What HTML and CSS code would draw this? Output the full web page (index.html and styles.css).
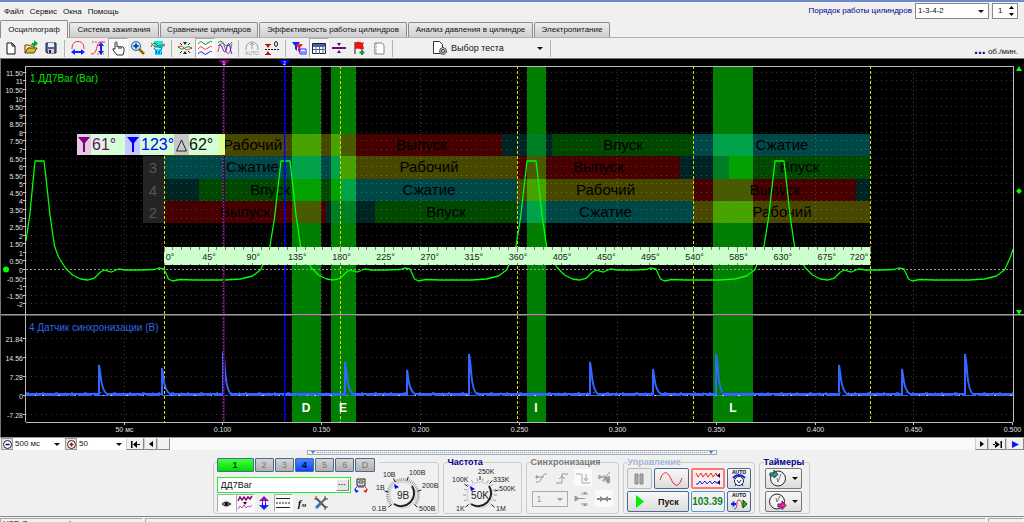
FILE: index.html
```html
<!DOCTYPE html>
<html lang="ru">
<head>
<meta charset="utf-8">
<title>USB Осциллограф</title>
<link rel="stylesheet" href="styles.css">
</head>
<body>
<header class="menubar">
  <nav class="menu">
    <button>Файл</button><button>Сервис</button><button>Окна</button><button>Помощь</button>
  </nav>
  <div class="order">
    <label for="order">Порядок работы цилиндров</label>
    <span class="pick order-pick"><select id="order"><option>1-3-4-2</option><option>1-2-4-3</option></select></span>
    <span class="spin">
      <input type="text" value="1" aria-label="Номер цилиндра">
      <svg width="7" height="12" viewBox="0 0 7 12"><path d="M3.500 1L6 4H1zM3.500 11L1 8H6z"/></svg>
    </span>
  </div>
</header>
<div class="tabs" role="tablist">
  <button class="tab active" role="tab" aria-selected="true">Осциллограф</button>
  <button class="tab t-ign" role="tab">Система зажигания</button>
  <button class="tab t-cmp" role="tab">Сравнение цилиндров</button>
  <button class="tab t-eff" role="tab">Эффективность работы цилиндров</button>
  <button class="tab t-prs" role="tab">Анализ давления в цилиндре</button>
  <button class="tab t-pow" role="tab">Электропитание</button>
</div>
<div class="toolbar">
  <button class="tool" aria-label="Новый"><svg viewBox="0 0 16 16"><path d="M4 3h5l3 3v8H4z" fill="#fff" stroke="#111"/><path d="M9 3v3h3" fill="none" stroke="#111"/></svg></button>
  <button class="tool" aria-label="Открыть"><svg viewBox="0 0 16 16"><path d="M2 13V5h4l1 1h4v2" fill="#ffe98a" stroke="#554400"/><path d="M2 13L5 8h9l-3 5z" fill="#d8b83a" stroke="#554400"/><path d="M8 5q1-3 3-2V0l4 3.500L11 7V5z" fill="#0a2"/></svg></button>
  <button class="tool" aria-label="Сохранить"><svg viewBox="0 0 16 16"><path d="M3 3h10v10H4l-1-1z" fill="#54669c" stroke="#223"/><path d="M5 3h6v4H5z" fill="#e8eef8"/><path d="M5 9h6v4H5z" fill="#ccd"/><path d="M6 10h2v3H6z" fill="#223"/></svg></button>
  <i class="sep"></i>
  <button class="tool" aria-label="Ширина по горизонтали"><svg viewBox="0 0 16 16"><path d="M2 9C2 4 4 1.500 8 1.500s6 2.500 6 7.500" fill="none" stroke="#f22"/><path d="M4 12h8" stroke="#12f" stroke-width="2"/><path d="M1 12l4-3v6zM15 12l-4-3v6z" fill="#12f"/></svg></button>
  <button class="tool" aria-label="Размах по вертикали"><svg viewBox="0 0 16 16"><path d="M1 14c7 1 5-12 9-12h5" fill="none" stroke="#f22"/><path d="M2 2h6M7 14h7" stroke="#d55" stroke-dasharray="2 1"/><path d="M11 5v7" stroke="#12f" stroke-width="2"/><path d="M11 2l3 4H8zM11 15l3-4H8z" fill="#12f"/></svg></button>
  <button class="tool pressed" aria-label="Рука"><svg viewBox="0 0 16 16"><path d="M5 9V3q0-1 1-1t1 1v4q1-1 2 0 1-1 2 0 2-1 3 1v3l-1 4H7L3 10q-1-2 2-1z" fill="#fff" stroke="#333"/><path d="M9 7v2M11 7v2" stroke="#333"/></svg></button>
  <button class="tool" aria-label="Лупа"><svg viewBox="0 0 16 16"><path d="M9 9l5 5" stroke="#a80" stroke-width="3"/><path d="M9 9l5 5" stroke="#543" stroke-width="1"/><circle cx="6" cy="6" r="4.500" fill="#bde4fa" stroke="#345c88"/><path d="M6 3.500v5M3.500 6h5" stroke="#14a" stroke-width="2"/></svg></button>
  <button class="tool" aria-label="Масштаб участка"><svg viewBox="0 0 16 16"><path d="M4 1h9v7H4zM5 9h7v6H5z" fill="#0ee"/><path d="M1 7q3-7 6-2t6 0l2-1" fill="none" stroke="#082"/><path d="M1 3q4 5 7 3t7 0" fill="none" stroke="#f33"/><path d="M4 8l3 4M12 8l-3 4M5 13h7" stroke="#12f" stroke-dasharray="2 1"/></svg></button>
  <i class="sep"></i>
  <button class="tool" aria-label="Совместить нули"><svg viewBox="0 0 16 16"><path d="M1 8q3-4 6 0t8-1" fill="none" stroke="#f33"/><path d="M1 6q3 5 7 2t7 1" fill="none" stroke="#093"/><path d="M3 3l2 2M13 3l-2 2M3 13l2-2M13 13l-2-2" stroke="#222"/><path d="M8 5L6 2h4zM8 11l-2 3h4z" fill="#222"/></svg></button>
  <button class="tool pressed" aria-label="Разнести лучи"><svg viewBox="0 0 16 16"><path d="M1 4q3-4 5-1t5 0 4-1" fill="none" stroke="#093"/><path d="M1 9q3-4 5-1t5 0 4-1" fill="none" stroke="#f33"/><path d="M1 14q3-4 5-1t5 0 4-1" fill="none" stroke="#12f"/></svg></button>
  <button class="tool" aria-label="Наложить лучи"><svg viewBox="0 0 16 16"><path d="M1 3q3-4 6 1t8-2" fill="none" stroke="#093"/><path d="M1 12C3 1 6 1 8 8s4 9 7-4" fill="none" stroke="#f33"/><path d="M1 6c4-5 5 7 7 6s2-10 4-8 1 8 3 10" fill="none" stroke="#12f"/></svg></button>
  <i class="sep"></i>
  <button class="tool" aria-label="Автомасштаб" disabled><svg viewBox="0 0 16 16"><path d="M2 10C2 5 4 2 8 2s6 3 6 8M8 3v6M6 5l2-2 2 2" fill="none" stroke="#999"/><text x="8" y="15" text-anchor="middle" class="mini" fill="#999">AUTO</text></svg></button>
  <button class="tool" aria-label="Установить ноль"><svg viewBox="0 0 16 16"><path d="M1 9.500h14" stroke="#111" stroke-dasharray="2 1"/><path d="M4 8L2 5h4zM4 11l-2 3h4z" fill="#a11"/><path d="M1 4.500h6M1 14.500h6" stroke="#a11"/><ellipse cx="12" cy="4" rx="1.500" ry="2.500" fill="none" stroke="#222"/></svg></button>
  <i class="sep"></i>
  <button class="tool" aria-label="Фильтр"><svg viewBox="0 0 16 16"><path d="M1 2h8L6 6v5L4 9V6z" fill="#12f"/><path d="M5 4h7L9 8v5L7 11V8z" fill="#e23"/><path d="M9 9h6v5H9z" fill="#fff" stroke="#12f"/><path d="M10 12h4" stroke="#12f"/></svg></button>
  <button class="tool pressed" aria-label="Таблица"><svg viewBox="0 0 16 16"><path d="M1.500 3.500h13v10h-13z" fill="#fff" stroke="#124"/><path d="M2 4h12v2H2z" fill="#55a"/><path d="M2 6.500h13M2 9.500h13M5 4v10M8.500 4v10M12 4v10" stroke="#568"/></svg></button>
  <button class="tool" aria-label="Линейка"><svg viewBox="0 0 16 16"><path d="M1 8h14" stroke="#808" stroke-width="2"/><path d="M8 6L6 3h4zM8 10l-2 3h4z" fill="#222"/></svg></button>
  <button class="tool" aria-label="Добавить метку"><svg viewBox="0 0 16 16"><path d="M4 2v12" stroke="#111"/><path d="M4 3q2-2 5-1t4 0l-1 3 1 4q-2 1-4 0t-5 0z" fill="#e11"/><path d="M11 10v5M8.500 12.500h5" stroke="#094" stroke-width="2"/></svg></button>
  <button class="tool" aria-label="Отчёт"><svg viewBox="0 0 16 16"><path d="M4 3h7l2 2v9H4z" fill="#fff" stroke="#888"/><path d="M3 4h3M3 7h3M3 10h3M3 13h3" stroke="#888" stroke-dasharray="1 1"/></svg></button>
  <i class="sep"></i>
  <button class="test">
    <svg class="test-icon" viewBox="0 0 16 16"><path d="M1.500 1.500h6l3 3v9h-9z" fill="#fff" stroke="#333"/><circle cx="11" cy="11" r="3.500" fill="#9ab09a" stroke="#333" stroke-dasharray="2 1"/><circle cx="11" cy="11" r="1.500" fill="#fff" stroke="#343"/></svg>
    <span>Выбор теста</span><b class="caret"></b>
  </button>
  <i class="sep"></i>
  <div class="rpm"><b>...</b> об./мин.</div>
</div>
<main class="scope">
  <svg id="chart" class="chart" viewBox="0 59 1024 378"></svg>
</main>
<div class="timebar">
  <button class="sq" aria-label="Уменьшить масштаб времени"><svg width="11" height="11" viewBox="0 0 11 11"><circle cx="5.500" cy="5.500" r="4" fill="#fff" stroke="#222"/><path d="M3.500 5.500h4" stroke="#00a" stroke-width="1.500"/></svg></button>
  <span class="pick scale-pick"><select aria-label="Развёртка"><option>500 мс</option></select></span>
  <button class="sq" aria-label="Увеличить масштаб"><svg width="11" height="11" viewBox="0 0 11 11"><circle cx="5.500" cy="5.500" r="4" fill="#fff" stroke="#222"/><path d="M3.500 5.500h4M5.500 3.500v4" stroke="#b00" stroke-width="1.500"/></svg></button>
  <span class="pick step-pick"><select aria-label="Шаг"><option>50</option></select></span>
  <button class="scroll wide" aria-label="В начало"><svg width="9" height="7" viewBox="0 0 9 7"><path d="M0 0h1.500v7H0zM6 0v7L2 3.500zM6 3h3v1H6z"/></svg></button>
  <button class="scroll" aria-label="Назад"><svg width="4" height="6" viewBox="0 0 4 6"><path d="M4 0v6L0 3z"/></svg></button>
  <button class="scroll" aria-label="Ползунок"></button>
  <span class="track"></span>
  <button class="scroll" aria-label="Вперёд"><svg width="4" height="6" viewBox="0 0 4 6"><path d="M0 0v6l4-3z"/></svg></button>
  <button class="scroll wide" aria-label="В конец"><svg width="9" height="7" viewBox="0 0 9 7"><path d="M9 0H7.500v7H9zM2 0v7l5-3.500zM0 3h3v1H0z"/></svg></button>
  <button class="scroll wide" aria-label="Следить"><svg width="7" height="7" viewBox="0 0 7 7"><path d="M0 0v7l7-3.500z" fill="#11f"/></svg></button>
</div>
<div class="splitter"><b></b><i></i><b></b></div>
<section class="panel">
  <div class="group channels">
    <div class="chan-row">
      <button class="chan on1">1</button><button class="chan">2</button><button class="chan">3</button><button class="chan on4">4</button><button class="chan">5</button><button class="chan">6</button><button class="chan">D</button>
    </div>
    <div class="chan-left">
      <div class="name-row">
        <span class="name"><input type="text" value="ДД7Bar" aria-label="Датчик"><button aria-label="Выбрать датчик">···</button></span>
        <svg width="16" height="16" viewBox="0 0 16 16"><path d="M4 2h8v7H4z" fill="#ddd" stroke="#222"/><path d="M6 4h4v2H6zM5 10h6" fill="#fff" stroke="#444"/><path d="M4 10q-3 1-1 4" fill="none" stroke="#12f"/><path d="M1 12l5 2-3 2z" fill="#12f"/><path d="M12 10q3 1 1 4" fill="none" stroke="#e22"/><path d="M15 12l-5 2 3 2z" fill="#e22"/></svg>
      </div>
      <div class="icon-row">
        <button class="tool pressed" aria-label="Видимость"><svg viewBox="0 0 16 16"><path d="M4 9q4-4 9 0-5 4-9 0z" fill="#bbb" stroke="#222"/><circle cx="8.500" cy="9" r="2" fill="#111"/></svg></button>
        <button class="tool pressed" aria-label="Инверсия"><svg viewBox="0 0 16 16"><path d="M1 6l2-4 2 3 2-3 2 3 2-3 2 2 2-3" fill="none" stroke="#808" stroke-width="1.500"/><path d="M1 14l2-3 2 2 2-3 2 3 2-2 2 1 2-2" fill="none" stroke="#c4b"/><path d="M6 7h4L8 10z" fill="#111"/></svg></button>
        <button class="tool" aria-label="Смещение"><svg viewBox="0 0 16 16"><path d="M8 1l5 5h-3v2H6V6H3z" fill="#91b"/><path d="M8 15l5-5h-3V8H6v2H3z" fill="#12f"/><path d="M7 6h2v4H7z" fill="#eef"/></svg></button>
        <button class="tool pressed" aria-label="Уровни"><svg viewBox="0 0 16 16"><path d="M1 3.500h14M1 12.500h14" stroke="#222"/><path d="M1 8h14" stroke="#222" stroke-dasharray="2 1"/></svg></button>
        <button class="tool fx" aria-label="Функция">f<small>м</small></button>
        <button class="tool" aria-label="Настройки"><svg viewBox="0 0 16 16"><path d="M3 3l10 10" stroke="#555" stroke-width="2"/><path d="M13 3L8 8" stroke="#666" stroke-width="2"/><path d="M8 8l-5 5" stroke="#37b" stroke-width="3"/><path d="M3 1v3H1M15 4h-3V1M12 15v-3h3" fill="none" stroke="#555"/></svg></button>
      </div>
    </div>
    <svg class="knob" id="gain" viewBox="0 0 68 50" width="68" height="50"></svg>
  </div>
  <fieldset class="group freq"><legend>Частота</legend><svg class="knob" id="rate" viewBox="0 0 75 46" width="75" height="46"></svg></fieldset>
  <fieldset class="group sync" disabled><legend>Синхронизация</legend>
    <div class="sync-row">
      <button class="tool" aria-label="Автосинхронизация"><svg viewBox="0 0 16 16"><path d="M3 12c7 2 4-9 11-8M2 7h9" fill="none" stroke="#999"/><path d="M3 5l3 2-3 2z" fill="#999"/></svg></button>
      <button class="tool" aria-label="По фронту"><svg viewBox="0 0 16 16"><path d="M2 13h6V4h6M5 9l3-3 3 3" fill="none" stroke="#999"/></svg></button>
      <button class="tool lit" aria-label="По спаду"><svg viewBox="0 0 16 16"><path d="M1 4h6v9h8M11 4v7M9 8l2 3 2-3" fill="none" stroke="#aaa"/></svg></button>
      <button class="tool" aria-label="По уровню"><svg viewBox="0 0 16 16"><path d="M2 7h6M3 5v4l3-2zM8 5v7M8 8l6-6M6 11l5-4" fill="none" stroke="#999"/><path d="M9 7l5-1v6l-2 2-3-4z" fill="#999"/></svg></button>
    </div>
    <div class="sync-row">
      <span class="pick sync-pick"><select aria-label="Канал синхронизации"><option>1</option></select></span>
      <button class="tool" aria-label="Уровень"><svg viewBox="0 0 16 16"><path d="M2 5v5l4-2.500zM6 7.500h6" fill="#999" stroke="#999"/><path d="M8 3h7M8 13h7" stroke="#999"/><path d="M10 1h4l-2 3zM10 15h4l-2-3z" fill="#999"/></svg></button>
      <button class="tool lit" aria-label="Центр"><svg viewBox="0 0 16 16"><path d="M1 8h14" stroke="#888" stroke-width="2"/><path d="M4 5l4 3-4 3zM12 5L8 8l4 3z" fill="#888"/></svg></button>
    </div>
  </fieldset>
  <fieldset class="group control"><legend>Управление</legend>
    <div class="ctl">
      <button class="btn off" aria-label="Пауза" disabled><svg width="12" height="14" viewBox="0 0 12 14"><path d="M2 2h3v10H2zM7 2h3v10H7z" fill="#aaa" stroke="#888"/></svg></button>
      <button class="btn" aria-label="Форма сигнала"><svg width="26" height="16" viewBox="0 0 26 16"><path d="M2 9C5 0 9-1 13 8s8 8 11-1" fill="none" stroke="#e22"/></svg></button>
      <button class="btn red" aria-label="Запись"><svg width="26" height="16" viewBox="0 0 26 16"><path d="M1 2l2 4 3-4 2 4 3-4 2 4 3-4 2 4 3-4 1 3h2" fill="none" stroke="#e22"/><path d="M1 13h2l2-3 2 3 3-3 2 3 3-3 2 3 3-3 1 2h2" fill="none" stroke="#12e"/><path d="M25 2v5l-3-2.500zM25 9v5l-3-2.500z" fill="#116"/></svg></button>
      <button class="btn" aria-label="Авто по времени"><svg width="20" height="19" viewBox="0 0 20 19"><text x="10" y="5" text-anchor="middle" class="mini bold">AUTO</text><path d="M4 9q6-6 12 0" fill="none" stroke="#12e" stroke-width="2"/><circle cx="10" cy="12" r="4.500" fill="#fff" stroke="#222"/><path d="M8 11l2 3 2-3M6 17l1-2M14 17l-1-2" fill="none" stroke="#12a"/></svg></button>
      <button class="btn run"><svg width="8" height="13" viewBox="0 0 8 13"><path d="M0 0v13l8-6.500z" fill="#0e0"/></svg><span>Пуск</span></button>
      <output class="btn value">103.39</output>
      <button class="btn" aria-label="Авто по сигналу"><svg width="20" height="19" viewBox="0 0 20 19"><text x="10" y="5" text-anchor="middle" class="mini bold">AUTO</text><path d="M5 17c5 0 1-9 5-9s2 9 5 7" fill="none" stroke="#a33"/><path d="M2 12h5M4.500 9.500v5" stroke="#12e" stroke-width="2"/><path d="M14 8v8l4-4z" fill="#0c0" stroke="#232"/></svg></button>
    </div>
  </fieldset>
  <fieldset class="group timers"><legend>Таймеры</legend>
    <div class="tim">
      <button class="btn gray" aria-label="Таймер старта"><svg width="20" height="19" viewBox="0 0 20 19"><circle cx="10" cy="9.500" r="7.500" fill="#f4f4f4" stroke="#222"/><path d="M9 9l1 4 3-8" fill="none" stroke="#777"/><path d="M2 4h4V1l4 4.500L6 9V7H2z" fill="#3a9a8a" stroke="#144"/></svg><b class="caret"></b></button>
      <button class="btn gray" aria-label="Таймер остановки"><svg width="20" height="19" viewBox="0 0 20 19"><circle cx="9" cy="9.500" r="7.500" fill="#f4f4f4" stroke="#222"/><path d="M8 6l1 4 3-6" fill="none" stroke="#777"/><path d="M10 12h4V9l4 4.500-4 4V15h-4z" fill="#e2b" stroke="#615"/></svg><b class="caret"></b></button>
    </div>
  </fieldset>
</section>
<footer class="status"><span class="st-a">USB Осциллограф</span><span class="st-b"></span><span class="st-c"></span></footer>
<script src="chart.js"></script>
</body>
</html>
```
FILE: styles.css
```css
* { box-sizing: border-box; }
body {
  margin: 0; height: 100vh; overflow: hidden;
  display: flex; flex-direction: column;
  background: #f0f0f0; color: #111;
  font: 8px/10px "Liberation Sans", Arial, sans-serif;
  border-top: 2px solid #6c8ac8;
}
button, input, select {
  font: inherit; color: inherit; margin: 0; padding: 0; border: 0;
  background: none; appearance: none; border-radius: 0; outline: 0;
}
svg { display: block; flex: none; }
.mini { font: 5px "Liberation Sans", sans-serif; }
.bold { font-weight: bold; }

.menubar { display: flex; justify-content: space-between; height: 18px; flex: none; padding: 0 6px 0 4px; }
.menu { display: flex; gap: 6px; align-items: center; padding-top: 2px; }
.order { display: flex; align-items: center; gap: 3px; }
.order label { color: #00008b; }
.pick { position: relative; display: flex; }
.pick select { width: 100%; padding: 0 12px 0 2px; line-height: 12px; }
.pick::after, .caret { border: 3px solid transparent; border-top-color: #111; border-bottom: 0; width: 0; height: 0; }
.pick::after { content: ""; position: absolute; right: 4px; top: 50%; margin-top: -1px; pointer-events: none; }
.order-pick { width: 74px; height: 16px; background: #fff; border: 1px solid #888; }
.spin { display: flex; align-items: center; width: 26px; height: 16px; background: #fff; border: 1px solid #888; }
.spin input { width: 15px; padding-left: 5px; }

.tabs { display: flex; align-items: flex-end; gap: 1px; height: 18px; flex: none; border-bottom: 1px solid #b0b0b0; }
.tab {
  height: 15px; text-align: center; white-space: nowrap;
  border: 1px solid #8c8c8c; border-bottom: 0; border-radius: 2px 2px 0 0;
  background: linear-gradient(#ececec, #cfcfcf);
}
.tab.active { width: 68px; height: 18px; margin-bottom: -1px; background: #f0f0f0; }
.t-ign { width: 90px; }
.t-cmp { width: 98px; }
.t-eff { width: 148px; }
.t-prs { width: 125px; }
.t-pow { width: 76px; }

.toolbar { display: flex; align-items: center; height: 21px; flex: none; padding: 0 6px 0 1px; border-bottom: 1px solid #777; }
.tool { width: 20px; height: 20px; display: flex; align-items: center; justify-content: center; }
.tool svg { width: 16px; height: 16px; }
.pressed { background: #fafafa; border: 1px solid; border-color: #aaa #fff #fff #aaa; }
.sep { width: 1px; height: 17px; margin: 0 3px; background: #b4b4b4; }
.test { display: flex; align-items: center; gap: 3px; width: 151px; height: 20px; padding: 0 4px 0 36px; font-size: 9px; }
.test-icon { width: 16px; height: 16px; }
.test .caret { margin-left: auto; }
.rpm { margin-left: auto; padding-top: 4px; }
.rpm b { color: #00008b; font-size: 14px; }

.scope { flex: none; background: #000; }
.chart { width: 100%; height: auto; }
.chart text { font-family: "Liberation Sans", Arial, sans-serif; }
.crisp { shape-rendering: crispEdges; }
.axis-text { font-size: 7px; fill: #e0e0e0; }
.stroke-text { font-size: 15px; fill: #000; text-anchor: middle; }
.cyl-text { font-size: 15px; fill: #555; text-anchor: middle; }
.ruler-text { font-size: 9px; fill: #222; text-anchor: middle; }
.name-text { font-size: 10px; }
.cursor-text { font-size: 16px; }
.mark-text { font-size: 12px; font-weight: bold; fill: #fff; text-anchor: middle; }

.timebar { display: flex; align-items: center; height: 13px; flex: none; background: #fafafa; border-top: 1px solid #999; }
.sq { width: 12px; height: 12px; margin-left: 1px; background: #e4e4e4; border: 1px solid #999; display: flex; align-items: center; justify-content: center; }
.scale-pick, .step-pick { font-size: 8px; background: #fff; }
.scale-pick { width: 51px; }
.step-pick { width: 49px; }
.scroll { width: 13px; height: 12px; display: flex; align-items: center; justify-content: center; background: #f0f0f0; border: 1px solid; border-color: #fff #888 #888 #ccc; }
.scroll.wide { width: 18px; }
.track { flex: 1; }

.splitter { display: flex; align-items: center; gap: 2px; width: 40%; height: 5px; flex: none; align-self: center; padding: 0 3px; border: 1px solid #aaa; }
.splitter i { flex: 1; border-top: 1px dotted #6ab0f0; }
.splitter b { border: 2px solid transparent; border-top: 3px solid #28e; border-bottom: 0; }

.panel { display: flex; justify-content: center; gap: 4px; flex: none; height: 61px; padding: 2px 2px 2px 0; }
.group { min-width: 0; margin: 0; padding: 0 2px; border: 1px solid #ccc; border-radius: 3px; }
.group legend { margin-left: 2px; padding: 0; height: 10px; font: bold 9px/10px "Liberation Sans", sans-serif; color: #00008b; }
.channels { display: grid; grid-template-columns: 155px 1fr; width: 226px; margin-top: 5px; padding-left: 3px; }
.chan-row { grid-column: 1 / 3; display: flex; gap: 1px; height: 14px; width: 162px; padding-right: 4px; margin-top: -5px; background: #f0f0f0; }
.chan { flex: 1; border: 1px solid #4a6a90; border-radius: 1px; background: linear-gradient(#d4d4d4, #b0b0b0); color: #777; font-size: 9px; }
.chan.on1 { flex: 0 0 37px; background: linear-gradient(#4f4, #0d0); color: #040; font-weight: bold; }
.chan.on4 { background: linear-gradient(#48f, #14f); color: #003; font-weight: bold; }
.chan-left { display: flex; flex-direction: column; gap: 1px; padding-top: 5px; }
.name-row { display: flex; align-items: center; gap: 2px; }
.name { display: flex; width: 134px; height: 16px; padding: 1px; border: 1px solid #2e2; background: #fff; }
.name input { flex: 1; min-width: 0; padding-left: 2px; font-size: 9px; }
.name button { width: 13px; background: #e8e8e8; border: 1px solid; border-color: #fff #888 #888 #fff; font-weight: bold; line-height: 8px; }
.icon-row { display: flex; height: 18px; }
.icon-row .tool { width: 19px; height: 18px; }
.fx { font: italic bold 11px "Liberation Serif", serif; }
.fx small { font-size: 7px; padding-top: 3px; }
.channels .knob { margin-top: -6px; }
.knob text { font: 7px "Liberation Sans", sans-serif; fill: #222; }
.knob .knob-value { font-size: 10px; text-anchor: middle; }
.freq { width: 79px; }
.freq .knob { margin-top: -1px; }
.sync { width: 93px; }
.group.sync legend { color: #777; }
.sync-row { display: flex; align-items: center; justify-content: space-between; height: 21px; padding: 0 3px; }
.sync-row .tool { width: 18px; height: 17px; }
.lit { background: #fafafa; }
.sync-pick { width: 36px; height: 16px; border: 1px solid #aaa; color: #777; font-size: 9px; padding-left: 2px; }
.sync-pick::after { border-top-color: #999; }
.control { width: 132px; }
.group.control legend { color: #9fb6d4; }
.ctl { display: grid; grid-template-columns: 25px 35px 34px 24px; grid-auto-rows: 21px; gap: 2px; padding: 1px; }
.btn { display: flex; align-items: center; justify-content: center; border: 1px solid #4a6a90; border-radius: 2px; background: linear-gradient(#f8f8f8, #dcdcdc); }
.btn.off { border-color: #bbb; background: #ececec; }
.btn.red { border: 2px solid #f77; background: #fbeeee; }
.btn.run { grid-column: span 2; gap: 14px; font-weight: bold; font-size: 9px; }
.btn.value { color: #188018; font-weight: bold; font-size: 10px; border-color: #5a9ad0; background: #eef2f6; }
.btn.gray { border-color: #777; gap: 4px; }
.timers { width: 51px; }
.tim { display: grid; grid-template-columns: 37px; grid-auto-rows: 21px; gap: 2px; padding: 1px 3px; }

.status { display: flex; gap: 2px; flex: none; height: 20px; border-top: 1px solid #888; padding-top: 1px; }
.status span { border: 1px solid; border-color: #aaa #fff #fff #aaa; }
.st-a { width: 143px; padding: 0 2px; }
.st-b { flex: 1; }
.st-c { width: 36px; }
```
FILE: chart.js
```js
const NS = "http://www.w3.org/2000/svg";
const chart = document.getElementById("chart");

function add(parent, tag, attrs, text) {
  const el = document.createElementNS(NS, tag);
  for (const key in attrs) el.setAttribute(key, attrs[key]);
  if (text !== undefined) el.textContent = text;
  parent.appendChild(el);
  return el;
}
const line = (x1, y1, x2, y2, stroke, dash = "none", width = 1) =>
  add(chart, "line", { x1, y1, x2, y2, stroke, "stroke-dasharray": dash, "stroke-width": width, class: "crisp" });
const rect = (x, y, width, height, fill, opacity = 1) =>
  add(chart, "rect", { x, y, width, height, fill, "fill-opacity": opacity, class: "crisp" });
const text = (x, y, cls, value, extra = {}) => add(chart, "text", { x, y, class: cls, ...extra }, value);

const LEFT = 26, RIGHT = 1013, TOP = 66, SPLIT = 315, BOTTOM = 422;
const timeX = ms => LEFT + (RIGHT - LEFT) * ms / 500 - 0.5;
const barY = v => 269.5 - 17.15 * v;
const voltY = v => 395.5 - 2.62 * v;
const angleX = a => 164 + a * 706 / 720;

rect(0, 59, 1024, 378, "#000");

// phase markers
const marks = [["D", 292, 321, 306], ["E", 331, 356, 343], ["I", 527, 546, 536], ["L", 713, 753, 733]];
marks.forEach(([name, a, b]) => rect(a, TOP, b - a, BOTTOM - TOP, "#008000"));

// grid and axis labels
for (let v = -2; v <= 11.5; v += 0.5) {
  const y = Math.floor(barY(v)) + 0.5;
  line(LEFT, y, RIGHT, y, v === 0 ? "#999" : "#3a3a3a", v === 0 ? "2 2" : "1 4");
  line(LEFT - 3, y, LEFT, y, "#ccc");
  text(23, y + 3, "axis-text", v % 1 ? v.toFixed(2) : v, { "text-anchor": "end" });
}
[21.84, 14.56, 7.28, 0, -7.28].forEach(v => {
  const y = Math.floor(voltY(v)) + 0.5;
  line(LEFT, y, RIGHT, y, v === 0 ? "#ccc" : "#3a3a3a", v === 0 ? "2 2" : "1 4");
  line(LEFT - 3, y, LEFT, y, "#ccc");
  text(23, y + 3, "axis-text", v, { "text-anchor": "end" });
});
for (let t = 50; t <= 500; t += 50) {
  const x = Math.floor(timeX(t)) + 0.5;
  if (t < 500) line(x, TOP, x, BOTTOM, "#444", "1 3");
  line(x, BOTTOM, x, BOTTOM + 3, "#ccc");
  text(x, 432, "axis-text", t === 50 ? "50 мс" : (t / 1000).toFixed(3), { "text-anchor": "middle" });
}

// stroke table: [colour, label, from x, to x]
const Y = "#ff0", R = "#f00", C = "#0ff", G = "#0f0", O = "#008080";
const rows = [
  ["", [[Y, "Рабочий", 164, 341], [R, "Выпуск", 341, 502], [O, "", 502, 552], [G, "Впуск", 552, 694], [C, "Сжатие", 694, 870]]],
  ["3", [[C, "Сжатие", 164, 341], [Y, "Рабочий", 341, 517], [R, "Выпуск", 517, 680], [O, "", 680, 729], [G, "Впуск", 729, 870]]],
  ["4", [[O, "", 164, 199], [G, "Впуск", 199, 341], [C, "Сжатие", 341, 517], [Y, "Рабочий", 517, 694], [R, "Выпуск", 694, 856], [O, "", 856, 870]]],
  ["2", [[R, "Выпуск", 164, 326], [O, "", 326, 375], [G, "Впуск", 375, 517], [C, "Сжатие", 517, 694], [Y, "Рабочий", 694, 870]]]
];
const rowTop = [134, 156, 179, 201, 223];
rows.forEach(([cyl, cells], i) => {
  const top = rowTop[i], height = rowTop[i + 1] - top;
  if (cyl) {
    rect(143, top, 21, height, "#242424");
    text(153, top + 17, "cyl-text", cyl);
  }
  cells.forEach(([fill, label, a, b]) => {
    rect(a, top, b - a, height, fill, 0.28);
    if (label) text((a + b) / 2, top + 16, "stroke-text", label);
  });
});

[0, 180, 360, 540, 720].forEach(a => {
  const x = Math.floor(angleX(a)) + 0.5;
  line(x, TOP, x, BOTTOM, "#dddd00", "3 2");
});

// pressure trace, relative to the centre of each compression peak
const fall = [[4.5, 161], [6.5, 178], [10.5, 215], [15, 246], [19, 257], [26, 268], [33, 275], [41, 279], [48, 280], [55, 278], [61, 272], [65, 270], [72, 272], [79, 269], [86, 270], [100, 270], [115, 269.500], [119, 268], [124.5, 269], [129, 279], [133, 281], [140, 279.500], [155, 280], [180, 280]];
const rise = [[-60, 280], [-45, 279], [-33, 276], [-25, 270], [-19, 257], [-15.5, 246], [-11, 218], [-4.5, 161]];
const peaks = [39.5, 285.5, 531.5, 779.5, 1029.5];
const points = [[26, 241], [30, 213], [35, 161]];
peaks.forEach((c, i) => {
  if (i > 0) rise.forEach(([dx, y]) => points.push([c + dx, y]));
  if (i < 4) fall.forEach(([dx, y]) => points.push([c + dx, y]));
});
const visible = points.filter(p => p[0] < 1011);
visible.push([1013, 249]);
add(chart, "polyline", { points: visible.join(" "), fill: "none", stroke: "#0f0", "stroke-width": 1.3, "stroke-linejoin": "round" });

// synchronisation pulses: [x, peak y]
const pulses = [[99, 365], [162, 368], [223, 352], [345, 362], [407, 370], [469, 354], [590, 362], [653, 369], [716, 354], [839, 365], [902, 369], [965, 354]];
let sync = "M26 394";
pulses.forEach(([x, y]) => {
  sync += `H${x}V${y}L${x + 1.5} ${y + 10}Q${x + 3} 391 ${x + 8} 394`;
});
add(chart, "path", { d: sync + "H1013", fill: "none", stroke: "#36f", "stroke-width": 2 });
line(LEFT, 395.5, RIGHT, 395.5, "#36f", "9 1 5 3 14 2");
line(LEFT, 392.5, RIGHT, 392.5, "#2448b0", "3 7 1 5 2 11");

// cursors
rect(223, TOP, 2, BOTTOM - TOP, "#480048");
line(223.5, TOP, 223.5, BOTTOM, "#a030a0", "1 2");
rect(284, TOP, 1, BOTTOM - TOP, "#0000ff");
rect(285, TOP, 1, BOTTOM - TOP, "#0000ff", 0.4);
[[224, "#800080", 1], [284.5, "#0000ff", 2]].forEach(([x, fill, n]) => {
  add(chart, "path", { d: `M${x - 6} 60h12l-6 6z`, fill });
  text(x, 65, "mini", n, { fill: "#fff", "text-anchor": "middle" });
});

// degree ruler
rect(164, 247, 706, 18, "#ccffcc");
for (let a = 0; a <= 720; a += 9) {
  const x = Math.floor(angleX(a)) + 0.5;
  line(x, 247, x, a % 45 ? 250 : 252, "#777");
  line(x, a % 45 ? 264 : 263, x, 265, "#777");
}
for (let a = 0; a <= 720; a += 45) {
  const x = a === 0 ? 170 : a === 720 ? 859 : angleX(a) + 1;
  text(x, 260, "ruler-text", a + "°");
}

// cursor read-outs
rect(77, 134, 148, 21, "#d4ffd4");
rect(219, 134, 6, 21, "#d8ff90");
rect(77, 134, 14, 21, "#e4c8e4");
rect(125, 134, 15, 21, "#c8c8ff");
const cursorMark = (x, fill) => add(chart, "path", { d: `M${x - 6} 137h12l-5 6v9h-2v-9z`, fill });
cursorMark(84, "#800080");
cursorMark(133, "#0000ff");
text(92, 150, "cursor-text", "61°", { fill: "#800080" });
text(141, 150, "cursor-text", "123°", { fill: "#0000ff" });
rect(174, 134, 15, 21, "#c8c8c8");
add(chart, "path", { d: "M181.500 140l-5 11h10z", fill: "none", stroke: "#222" });
text(189, 150, "cursor-text", "62°", { fill: "#111" });

text(30, 82, "name-text", "1 ДД7Bar (Bar)", { fill: "#00e000" });
text(29, 331, "name-text", "4 Датчик синхронизации (В)", { fill: "#3264e8" });
marks.forEach(([name, , , x]) => text(x, 412, "mark-text", name));

// frame
line(LEFT, 66.5, RIGHT, 66.5, "#bbb");
line(0, 314.5, 1024, 314.5, "#999");
line(0, 315.5, 1024, 315.5, "#555");
line(LEFT, 422.5, RIGHT, 422.5, "#bbb");
line(25.5, TOP, 25.5, BOTTOM, "#bbb");
line(1013.5, TOP, 1013.5, BOTTOM, "#bbb");
line(0.5, 59, 0.5, 437, "#777");
add(chart, "circle", { cx: 6, cy: 269.5, r: 3, fill: "#0f0" });
add(chart, "path", { d: "M1019 66l3 5h-6zM1019 188l3 3-3 3-3-3zM1016 310h6l-3 5z", fill: "#0f0" });

// rotary knobs
function knob(id, cx, cy, value, pointer, labels, dense) {
  const svg = document.getElementById(id);
  for (let a = -220; a <= 40; a += dense ? 7 : 20) {
    const r = a * Math.PI / 180;
    add(svg, "line", { x1: cx + 14 * Math.cos(r), y1: cy + 14 * Math.sin(r), x2: cx + 17 * Math.cos(r), y2: cy + 17 * Math.sin(r), stroke: "#999" });
  }
  labels.forEach(([x, y, name, a]) => {
    const r = a * Math.PI / 180;
    add(svg, "line", { x1: cx + 15 * Math.cos(r), y1: cy + 15 * Math.sin(r), x2: cx + 19 * Math.cos(r), y2: cy + 19 * Math.sin(r), stroke: "#222" });
    add(svg, "text", { x, y }, name);
  });
  add(svg, "circle", { cx, cy, r: 13, fill: "#f0f0f0", stroke: "#ccc" });
  add(svg, "path", { d: `M${cx + 9} ${cy - 9}A13 13 0 0 1 ${cx - 9} ${cy + 9}`, fill: "none", stroke: "#222", "stroke-width": 2 });
  add(svg, "path", { d: `M${pointer[0]} ${pointer[1]}l5 3-4 2z`, fill: "#00f" });
  add(svg, "text", { x: cx, y: cy + 4, class: "knob-value" }, value);
}
knob("gain", 31, 29, "9В", [22, 18], [[0, 45, "0.1В", 140], [4, 24, "1В", 192], [11, 11, "10В", 240], [37, 9, "100В", 286], [50, 22, "200В", 345], [47, 45, "500В", 40]], true);
knob("rate", 34, 29, "50K", [24, 20], [[10, 45, "1K", 140], [6, 16, "100K", 215], [32, 8, "250K", 270], [47, 16, "333K", 310], [53, 25, "500K", 345], [50, 45, "1M", 40]], false);
```
